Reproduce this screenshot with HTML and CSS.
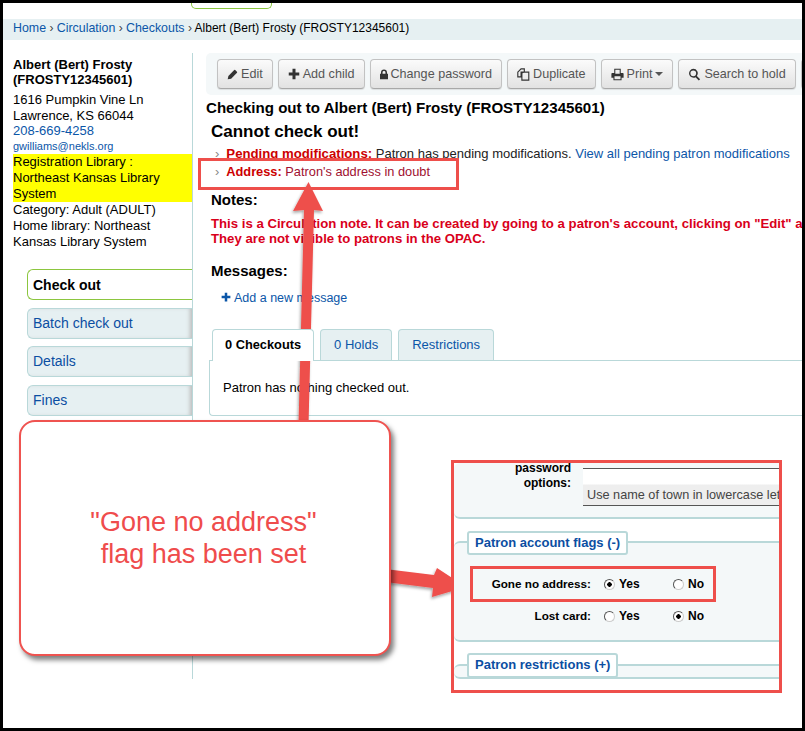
FILE: index.html
```html
<!DOCTYPE html>
<html lang="en">
<head>
    <meta charset="UTF-8">
    <meta name="viewport" content="width=device-width, initial-scale=1.0">
    <title>Checking out to Albert (Bert) Frosty</title>
    <link rel="stylesheet" href="styles.css">
</head>
<body>

    <div class="page">
        <div class="top-tab"></div>

        <div class="breadcrumb">
            <a href="#">Home</a> <span class="sep">›</span>
            <a href="#">Circulation</a> <span class="sep">›</span>
            <a href="#">Checkouts</a> <span class="sep">›</span>
            Albert (Bert) Frosty (FROSTY12345601)
        </div>

        <div class="layout">
            <aside class="sidebar">
                <h5 class="patron-name">Albert (Bert) Frosty (FROSTY12345601)</h5>
                <div class="patron-lines">
                    <div>1616 Pumpkin Vine Ln</div>
                    <div>Lawrence, KS 66044</div>
                    <div><a href="#">208-669-4258</a></div>
                    <div class="patron-email"><a href="#">gwilliams@nekls.org</a></div>
                </div>
                <div class="patron-library">Registration Library : Northeast Kansas Library System</div>
                <div class="patron-meta">Category: Adult (ADULT)</div>
                <div class="patron-meta">Home library: Northeast Kansas Library System</div>

                <ul class="side-nav">
                    <li class="active"><a href="#">Check out</a></li>
                    <li><a href="#">Batch check out</a></li>
                    <li><a href="#">Details</a></li>
                    <li><a href="#">Fines</a></li>
                </ul>
            </aside>

            <main class="main">
                <div class="toolbar">
                    <a class="btn" href="#"><svg class="icon" viewBox="0 0 16 16"><path d="M1 15l1-5 8.500-8.500a1 1 0 0 1 1.400 0l2.600 2.600a1 1 0 0 1 0 1.400L6 14z"/></svg>Edit</a>
                    <a class="btn" href="#"><svg class="icon icon-plus" viewBox="0 0 16 16"><path d="M6 1h4v5h5v4h-5v5H6v-5H1V6h5z"/></svg>Add child</a>
                    <a class="btn" href="#"><svg class="icon icon-lock" viewBox="0 0 12 16"><path d="M1.500 7V5a4.500 4.500 0 0 1 9 0v2h1.500v8H0V7zm2.300 0h4.400V5a2.200 2.200 0 0 0-4.400 0z"/></svg>Change password</a>
                    <a class="btn" href="#"><svg class="icon icon-wide" viewBox="0 0 16 16"><path fill="none" stroke="currentColor" stroke-width="1.400" d="M1 5l4-4h4v4H5v6H1zM6 6l3-1h5.500v10H6z"/></svg>Duplicate</a>
                    <a class="btn" href="#"><svg class="icon icon-wide" viewBox="0 0 16 16"><path fill-rule="evenodd" d="M4 1h8v5h2.500a1 1 0 0 1 1 1v5H13v3H3v-3H.5V7a1 1 0 0 1 1-1H4zm1.300 1.300V7h5.400V2.300zM4.300 10v3.700h7.400V10z"/></svg>Print<span class="caret"></span></a>
                    <a class="btn" href="#"><svg class="icon icon-search" viewBox="0 0 16 16"><path d="M6.500 1a5.500 5.500 0 0 1 4.400 8.800l4 4-1.600 1.600-4-4A5.500 5.500 0 1 1 6.500 1zm0 2a3.500 3.500 0 1 0 0 7 3.500 3.500 0 0 0 0-7z"/></svg>Search to hold</a>
                    <a class="btn btn-cut" href="#"></a>
                </div>

                <h4 class="checkout-title">Checking out to Albert (Bert) Frosty (FROSTY12345601)</h4>

                <div class="notices">
                    <h3 class="section-title">Cannot check out!</h3>
                    <ul class="alerts">
                        <li class="alert-pending"><b>Pending modifications:</b> <span class="plain">Patron has pending modifications.</span> <a href="#">View all pending patron modifications</a></li>
                        <li class="alert-address"><b>Address:</b> Patron's address in doubt</li>
                    </ul>

                    <h3 class="section-title notes-title">Notes:</h3>
                    <p class="circ-note">This is a Circulation note. It can be created by going to a patron's account, clicking on "Edit" and<br>They are not visible to patrons in the OPAC.</p>

                    <h3 class="section-title messages-title">Messages:</h3>
                    <a class="add-message" href="#"><svg class="icon" viewBox="0 0 16 16"><path d="M6 1h4v5h5v4h-5v5H6v-5H1V6h5z"/></svg>Add a new message</a>
                </div>

                <div class="tabs">
                    <a class="tab active" href="#">0 Checkouts</a>
                    <a class="tab" href="#">0 Holds</a>
                    <a class="tab" href="#">Restrictions</a>
                </div>
                <div class="tab-panel">Patron has nothing checked out.</div>
            </main>
        </div>
    </div>

    <!-- annotations drawn over the screenshot -->
    <svg class="arrows" viewBox="0 0 805 731">
        <defs>
            <filter id="arrow-shadow" x="-20%" y="-20%" width="140%" height="140%">
                <feDropShadow dx="-1" dy="2" stdDeviation="1.500" flood-color="#000" flood-opacity="0.35"/>
            </filter>
        </defs>
        <path filter="url(#arrow-shadow)" d="M308.500 182L323 211 314 210 308.500 425 298.500 425 304 210 293 211z"/>
        <path filter="url(#arrow-shadow)" d="M385 569L434 575 437 568 466 587 432 597 433 588 385 582z"/>
    </svg>

    <div class="mark mark-address"></div>

    <div class="callout">"Gone no address"<br>flag has been set</div>

    <div class="inset">
        <div class="fieldset fieldset-first">
            <div class="form-row password-row">
                <span class="form-label">password<br>options:</span>
                <div class="fake-select">Use name of town in lowercase letters</div>
            </div>
        </div>

        <div class="fieldset fieldset-flags">
            <div class="legend">Patron account flags (-)</div>
            <div class="form-row flag-row">
                <span class="form-label">Gone no address:</span>
                <span class="radio-opt"><i class="radio checked"></i>Yes</span>
                <span class="radio-opt"><i class="radio"></i>No</span>
            </div>
            <div class="form-row flag-row">
                <span class="form-label">Lost card:</span>
                <span class="radio-opt"><i class="radio"></i>Yes</span>
                <span class="radio-opt"><i class="radio checked"></i>No</span>
            </div>
        </div>

        <div class="fieldset fieldset-closed">
            <div class="legend">Patron restrictions (+)</div>
        </div>
    </div>

    <div class="mark mark-gone"></div>

</body>
</html>
```

FILE: styles.css
```css
html, body {
    margin: 0;
    padding: 0;
}

body {
    position: relative;
    width: 805px;
    height: 731px;
    overflow: hidden;
    background-color: #000;
    font-family: "Liberation Sans", Arial, sans-serif;
    font-size: 13px;
    color: #000;
}

a {
    color: #0b56a8;
    text-decoration: none;
}

.page {
    position: absolute;
    top: 3px;
    left: 3px;
    width: 799px;
    height: 725px;
    overflow: hidden;
    background-color: #fff;
}

.top-tab {
    width: 79px;
    height: 5px;
    margin-left: 188px;
    border: 1px solid #8cc63f;
    border-top: none;
    border-radius: 0 0 5px 5px;
}

.breadcrumb {
    height: 21px;
    margin-top: 10px;
    padding-left: 10px;
    font-size: 12px;
    line-height: 19px;
    background-color: #e6f0f2;
    white-space: nowrap;
}

.breadcrumb a {
    font-size: 12.400px;
}

.breadcrumb .sep {
    color: #444;
}

.layout {
    display: flex;
    margin-top: 13px;
}

.sidebar {
    flex: none;
    box-sizing: border-box;
    width: 190px;
    height: 626px;
    border-right: 1px solid #b9d8d9;
}

.patron-name {
    margin: 4px 0 0 10px;
    font-size: 13px;
    line-height: 15px;
}

.patron-lines {
    margin: 5px 0 0 10px;
    line-height: 15.500px;
}

.patron-email {
    font-size: 11px;
}

.patron-library {
    margin-left: 10px;
    line-height: 16px;
    background-color: #ff0;
}

.patron-meta {
    padding: 0 10px;
    line-height: 16px;
}

.side-nav {
    list-style: none;
    margin: 19px 0 0 24px;
    padding: 0;
    font-size: 14px;
}

.side-nav li {
    box-sizing: border-box;
    height: 31px;
    margin-bottom: 7.500px;
    padding-left: 5px;
    line-height: 29px;
    background-color: #e6f0f2;
    border: 1px solid #b9d8d9;
    border-right: none;
    border-radius: 6px 0 0 6px;
    box-shadow: inset -4px 0 4px -2px #bbb;
}

.side-nav li a {
    color: #0b4ea2;
}

.side-nav li.active {
    line-height: 30px;
    background-color: #fff;
    border-color: #8cc63f;
    box-shadow: none;
    font-weight: bold;
}

.side-nav li.active a {
    color: #000;
}

.main {
    flex: 1;
    min-width: 0;
    margin-left: 13px;
}

.toolbar {
    display: flex;
    gap: 5px;
    height: 42px;
    box-sizing: border-box;
    padding: 6px 0 0 11px;
    background-color: #f4f8f9;
    border-radius: 5px 0 0 5px;
}

.btn {
    display: flex;
    flex: none;
    align-items: center;
    box-sizing: border-box;
    height: 30px;
    padding: 0 9px;
    font-size: 12.600px;
    border: 1px solid #c2c2c2;
    border-bottom-color: #a8a8a8;
    border-radius: 4px;
    color: #555;
    background: linear-gradient(#fbfbfb, #e2e2e2);
    box-shadow: 0 1px 1px rgba(0, 0, 0, 0.1);
}

.btn .icon {
    fill: #333;
    color: #333;
}

.btn-cut {
    width: 20px;
}

.icon {
    flex: none;
    width: 11px;
    height: 11px;
    margin-right: 3px;
    fill: currentColor;
}

.icon-plus {
    width: 12px;
    height: 12px;
}

.icon-lock {
    width: 8px;
}

.icon-wide {
    width: 13px;
    height: 13px;
}

.icon-search {
    width: 13px;
    height: 13px;
}

.caret {
    margin-left: 3px;
    border: 4px solid transparent;
    border-top-color: #555;
    border-bottom: none;
}

.checkout-title {
    margin: 4px 0 0;
    font-size: 15.100px;
    line-height: 18px;
    white-space: nowrap;
}

.notices {
    margin-left: 5px;
}

.section-title {
    margin: 0;
    font-size: 17px;
    line-height: 20px;
}

.notices > .section-title:first-child {
    margin-top: 5px;
}

.alerts {
    list-style: none;
    margin: 3px 0 0 15px;
    padding: 0;
    color: #a01030;
    white-space: nowrap;
}

.alerts li {
    line-height: 18px;
}

.alerts li::before {
    content: "›";
    margin: 0 7px 0 -11px;
    color: #888;
}

.alerts b {
    color: #c00;
}

.alert-pending b {
    font-size: 13.200px;
}

.alert-address {
    font-size: 12.800px;
}

.alerts .plain {
    color: #222;
}

.notes-title {
    margin-top: 9px;
    font-size: 15px;
}

.circ-note {
    margin: 6px 0 0;
    font-size: 13.200px;
    font-weight: bold;
    line-height: 15px;
    color: #d9001b;
    white-space: nowrap;
}

.messages-title {
    margin-top: 15px;
    font-size: 15px;
}

.add-message {
    display: block;
    margin: 9px 0 0 10px;
    font-size: 12.500px;
    line-height: 16px;
}

.add-message .icon {
    width: 10px;
    height: 10px;
}

.tabs {
    display: flex;
    gap: 6px;
    margin: 23px 0 0 6px;
}

.tab {
    box-sizing: border-box;
    height: 31px;
    padding: 0 13px;
    line-height: 30px;
    background-color: #e6f0f2;
    border: 1px solid #b9d8d9;
    border-bottom: none;
    border-radius: 4px 4px 0 0;
}

.tab.active {
    position: relative;
    z-index: 1;
    height: 32px;
    padding: 0 12px;
    font-size: 12.800px;
    color: #000;
    font-weight: bold;
    background-color: #fff;
}

.tab-panel {
    box-sizing: border-box;
    height: 56px;
    margin: -1px 0 0 3px;
    padding: 19px 13px;
    line-height: 16px;
    border: 1px solid #b9d8d9;
    border-right: none;
    border-radius: 0 0 0 4px;
}

/* annotations */

.arrows {
    position: absolute;
    top: 0;
    left: 0;
    width: 805px;
    height: 731px;
    fill: #ee4f4b;
}

.mark {
    position: absolute;
    box-sizing: border-box;
    border: 3px solid #ee4f4b;
}

.mark-address {
    top: 158px;
    left: 198px;
    width: 261px;
    height: 32px;
}

.mark-gone {
    top: 566px;
    left: 470px;
    width: 246px;
    height: 36px;
}

.callout {
    position: absolute;
    top: 420px;
    left: 19px;
    display: flex;
    align-items: center;
    justify-content: center;
    box-sizing: border-box;
    width: 372px;
    height: 236px;
    padding: 0 3px 0 0;
    text-align: center;
    font-size: 27px;
    line-height: 32px;
    color: #ef4c4c;
    background-color: #fff;
    border: 2px solid #ef5350;
    border-radius: 16px;
    box-shadow: 3px 4px 5px rgba(0, 0, 0, 0.5);
}

.inset {
    position: absolute;
    top: 460px;
    left: 451px;
    box-sizing: border-box;
    width: 331px;
    height: 233px;
    overflow: hidden;
    background-color: #fff;
    border: 3px solid #ee4f4b;
    font-size: 12px;
    font-weight: bold;
}

.fieldset {
    position: relative;
    box-sizing: border-box;
    background-color: #f4f8f9;
    border: solid #b9d8d9;
    border-width: 2px 0 2px 0;
    border-radius: 6px 0 0 6px;
}

.fieldset-first {
    height: 56px;
    border-top: none;
}

.fieldset-flags {
    height: 101px;
    margin-top: 22px;
    padding-top: 25px;
}

.fieldset-closed {
    height: 15px;
    margin-top: 22px;
}

.legend {
    position: absolute;
    top: -12px;
    left: 13px;
    box-sizing: border-box;
    height: 24px;
    padding: 0 6px;
    font-size: 13px;
    line-height: 20px;
    color: #0b4ea2;
    background-color: #fff;
    border: 2px solid #b9d8d9;
    border-radius: 3px;
    white-space: nowrap;
}

.fieldset-closed .legend {
    top: -13px;
    height: 25px;
}

.form-row {
    display: flex;
    align-items: center;
}

.form-label {
    flex: none;
    width: 137px;
    margin-top: -2px;
    font-size: 11.700px;
    text-align: right;
}

.password-row {
    align-items: flex-start;
    line-height: 15px;
}

.password-row .form-label {
    width: 117px;
    margin-top: -2px;
    font-size: 12px;
}

.fake-select {
    flex: 1;
    box-sizing: border-box;
    height: 38px;
    margin: 5px 0 0 12px;
    padding: 16px 0 0 4px;
    overflow: hidden;
    white-space: nowrap;
    font-size: 12.700px;
    font-weight: normal;
    line-height: 20px;
    color: #444;
    background: linear-gradient(#fff 15px, #eee 16px, #eee);
    border-top: 1px solid #555;
    border-bottom: 1px solid #555;
}

.flag-row {
    height: 32px;
}

.radio-opt {
    display: flex;
    align-items: center;
    width: 69px;
}

.form-label + .radio-opt {
    margin-left: 13px;
}

.radio {
    box-sizing: border-box;
    display: block;
    width: 11px;
    height: 11px;
    margin-right: 4px;
    background-color: #fff;
    border: 1px solid #555;
    border-bottom-color: #ccc;
    border-right-color: #ccc;
    border-radius: 50%;
}

.radio.checked {
    background: radial-gradient(circle, #000 0 2px, #fff 2.500px);
}
```
